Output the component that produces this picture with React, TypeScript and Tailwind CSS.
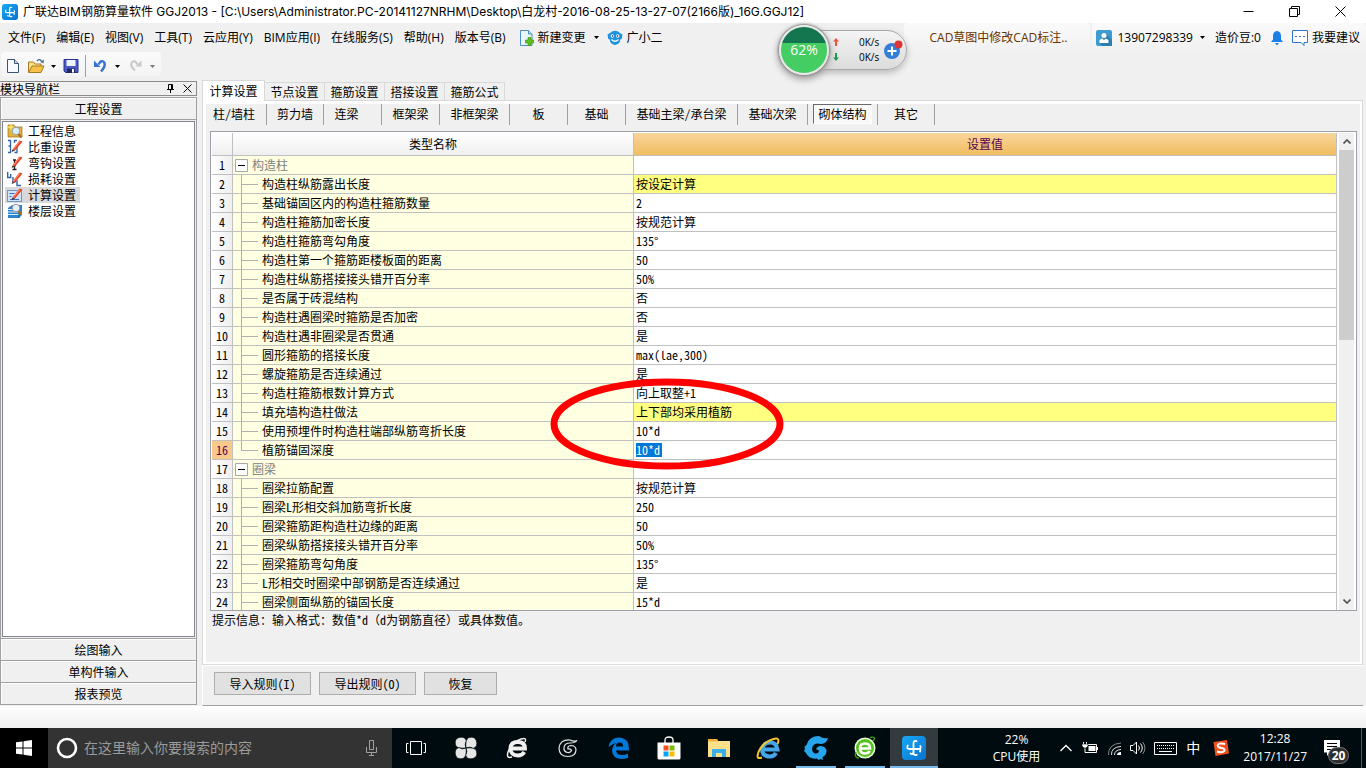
import React from "react";

const UI = "font-['Open_Sans','Noto_Sans_CJK_SC',sans-serif]";
const MONO = "font-['Noto_Sans_Mono_CJK_SC','Noto_Sans_CJK_SC',monospace]";

type Row = { name: string; value?: string; group?: boolean; mark?: boolean; last?: boolean; active?: boolean };

const rows: Row[] = [
  { name: "构造柱", group: true },
  { name: "构造柱纵筋露出长度", value: "按设定计算", mark: true },
  { name: "基础锚固区内的构造柱箍筋数量", value: "2" },
  { name: "构造柱箍筋加密长度", value: "按规范计算" },
  { name: "构造柱箍筋弯勾角度", value: "135°" },
  { name: "构造柱第一个箍筋距楼板面的距离", value: "50" },
  { name: "构造柱纵筋搭接接头错开百分率", value: "50%" },
  { name: "是否属于砖混结构", value: "否" },
  { name: "构造柱遇圈梁时箍筋是否加密", value: "否" },
  { name: "构造柱遇非圈梁是否贯通", value: "是" },
  { name: "圆形箍筋的搭接长度", value: "max(lae,300)" },
  { name: "螺旋箍筋是否连续通过", value: "是" },
  { name: "构造柱箍筋根数计算方式", value: "向上取整+1" },
  { name: "填充墙构造柱做法", value: "上下部均采用植筋", mark: true },
  { name: "使用预埋件时构造柱端部纵筋弯折长度", value: "10*d" },
  { name: "植筋锚固深度", value: "10*d", last: true, active: true },
  { name: "圈梁", group: true },
  { name: "圈梁拉筋配置", value: "按规范计算" },
  { name: "圈梁L形相交斜加筋弯折长度", value: "250" },
  { name: "圈梁箍筋距构造柱边缘的距离", value: "50" },
  { name: "圈梁纵筋搭接接头错开百分率", value: "50%" },
  { name: "圈梁箍筋弯勾角度", value: "135°" },
  { name: "L形相交时圈梁中部钢筋是否连续通过", value: "是" },
  { name: "圈梁侧面纵筋的锚固长度", value: "15*d" },
];

const menus = ["文件(F)", "编辑(E)", "视图(V)", "工具(T)", "云应用(Y)", "BIM应用(I)", "在线服务(S)", "帮助(H)", "版本号(B)"];

const categories: [string, string][] = [
  ["柱/墙柱", "w-[61px] pr-1"],
  ["剪力墙", "w-[57px]"],
  ["连梁", "w-[58px] pr-3"],
  ["框架梁", "w-[58px]"],
  ["非框架梁", "w-[70px]"],
  ["板", "w-[58px]"],
  ["基础", "w-[58px]"],
  ["基础主梁/承台梁", "w-[112px]"],
  ["基础次梁", "w-[70px]"],
  ["砌体结构", "w-[70px]"],
  ["其它", "w-[57px]"],
];

function AppLogo({ className }: { className: string }) {
  return (
    <svg className={className} viewBox="0 0 24 24" aria-hidden="true">
      <defs>
        <linearGradient id="logoFill" x1="0" y1="0" x2="1" y2="1">
          <stop offset="0" stopColor="#18a8f5" />
          <stop offset="1" stopColor="#0a72cf" />
        </linearGradient>
      </defs>
      <rect width="24" height="24" rx="4" fill="url(#logoFill)" />
      <path d="M14.500 5.200Q11.500 4 11.500 7.500v9q0 3.300 3.300 2.300M8.500 17.500q2.500 1.500 3-1.500M5.800 9.500q-1.800 3.500 1.700 3.500h8.500q3.800 0 2.300-3M17.500 13q1.500.5.500 2.500" fill="none" stroke="#fff" strokeWidth="1.800" strokeLinecap="round" />
    </svg>
  );
}

function Caret({ className = "text-black" }: { className?: string }) {
  return (
    <svg className={`h-[3px] w-[5px] ${className}`} viewBox="0 0 5 3" aria-hidden="true">
      <path d="M0 0h5L2.500 3z" fill="currentColor" />
    </svg>
  );
}

const pencil = (
  <g>
    <path d="M5.500 10.500 12.500 1.500l3 1-7.500 9z" fill="#e8401f" />
    <path d="M5.500 10.500 12 2.200l1.200.6-6.500 8z" fill="#ff8a6c" />
    <path d="m5.500 10.500-.9 2.500 3.400-1.500z" fill="#333" />
  </g>
);

const modules: { label: string; icon: React.ReactNode }[] = [
  {
    label: "工程信息",
    icon: (
      <g>
        <path d="M1 2h6l1 2h7v10H1z" fill="#e7b437" stroke="#97701e" strokeWidth=".7" />
        <path d="M0 3l3 .5L4 0l1 3 3 1-3 1-1 3-1-3-3-.5z" fill="#ffe45e" />
        <circle cx="9" cy="8" r="3.800" fill="#dcecf8" stroke="#8aa3b8" />
        <path d="m11.500 11 3 3.500" stroke="#b06c1a" strokeWidth="2" />
      </g>
    ),
  },
  {
    label: "比重设置",
    icon: (
      <g>
        <path d="M1 1.500h2.500v12H1M10 1.500H7.500V4M7.500 13.500H10V8M1.500 7h2" fill="none" stroke="#3262a8" strokeWidth="1.300" />
        {pencil}
      </g>
    ),
  },
  {
    label: "弯钩设置",
    icon: (
      <g>
        <path d="M6 5h3M7.500 5v9M5.500 14.500h4M6 10.500h3" fill="none" stroke="#222" strokeWidth="1.300" />
        {pencil}
      </g>
    ),
  },
  {
    label: "损耗设置",
    icon: (
      <g>
        <path d="M.7 1v5.500h3V3M6 6v4.500h3M10 9v5.500h4" fill="none" stroke="#3262a8" strokeWidth="1.400" />
        {pencil}
      </g>
    ),
  },
  {
    label: "计算设置",
    icon: (
      <g>
        <rect x=".5" y="3.500" width="14" height="11" fill="#cfe2fa" stroke="#6d96cf" />
        <path d="M2.500 6.500h5M2.500 9.500h2M3 12.500h9" stroke="#3f6db4" />
        {pencil}
      </g>
    ),
  },
  {
    label: "楼层设置",
    icon: (
      <g>
        <path d="M1 5 5 2h10v10l-3 3H1z" fill="#2f83cc" />
        <path d="M1 6.500h11M1 9h11M1 11.500h11" stroke="#d9f0ff" />
        <path d="M12 5.500V15" stroke="#1a5b9a" />
        <circle cx="9" cy="5" r="3.800" fill="#e7f0f5" stroke="#8b98a3" />
        <path d="m11.500 8 3 3.500" stroke="#b06c1a" strokeWidth="2" />
      </g>
    ),
  },
];

function TitleBar() {
  return (
    <header className="flex h-[23px] shrink-0 items-center bg-white pl-0.5 text-xs">
      <AppLogo className="h-4 w-4" />
      <h1 className="ml-[5px] flex-1 whitespace-nowrap font-['Inter','Noto_Sans_CJK_SC',sans-serif] leading-4">
        广联达BIM钢筋算量软件 GGJ2013 - [C:\Users\Administrator.PC-20141127NRHM\Desktop\白龙村-2016-08-25-13-27-07(2166版)_16G.GGJ12]
      </h1>
      <div className="mr-[3px] flex">
        <button aria-label="最小化" className="flex h-[21px] w-[46px] items-center justify-center">
          <svg className="h-[11px] w-[11px]" viewBox="0 0 11 11"><path d="M.5 5.500h10" stroke="#000" /></svg>
        </button>
        <button aria-label="还原" className="flex h-[21px] w-[46px] items-center justify-center">
          <svg className="h-[11px] w-[11px]" viewBox="0 0 11 11"><path d="M.5 2.500h8v8h-8zM2.500 2.500v-2h8v8h-2" fill="none" stroke="#000" /></svg>
        </button>
        <button aria-label="关闭" className="flex h-[21px] w-[46px] items-center justify-center">
          <svg className="h-[11px] w-[11px]" viewBox="0 0 11 11"><path d="m.5.500 10 10m0-10-10 10" stroke="#000" /></svg>
        </button>
      </div>
    </header>
  );
}

function MenuBar() {
  return (
    <nav className="flex h-[29px] shrink-0 items-center pl-2 text-xs">
      <div className="flex gap-[11px] whitespace-nowrap">
        {menus.map((m) => (
          <button key={m}>{m}</button>
        ))}
      </div>
      <button className="ml-3.5 flex items-center whitespace-nowrap">
        <svg className="mr-1 h-4 w-[14px]" viewBox="0 0 14 16" aria-hidden="true">
          <path d="M.5.500h8l3.500 3.500v11.500H.500z" fill="#e9f5fd" stroke="#4b8fc2" />
          <path d="M8.500.500V4H12" fill="#b9dcf2" stroke="#4b8fc2" />
          <path d="M8 7.500h3v2.500h2.700v3H11v2.700H8V13H5.500v-3H8z" fill="#5fbf1d" stroke="#3a8f10" strokeWidth=".6" />
        </svg>
        新建变更
        <span className="ml-2"><Caret /></span>
      </button>
      <button className="ml-2 flex items-center whitespace-nowrap">
        <svg className="mr-1 h-4 w-4" viewBox="0 0 16 16" aria-hidden="true">
          <path d="M3 3Q8-1.500 13 3l2.500 1.500-.8 4.500-1.400.5Q13 14 8 15 3 14 2.700 9.500L1.300 9 .5 4.500z" fill="#1d93e0" />
          <circle cx="5.300" cy="6" r="1.700" fill="#fff" />
          <circle cx="10.700" cy="6" r="1.700" fill="#fff" />
          <circle cx="5.500" cy="6" r=".8" fill="#124" />
          <circle cx="10.500" cy="6" r=".8" fill="#124" />
          <path d="M4.500 9.500q3.500 3.500 7 0" fill="none" stroke="#fff" strokeWidth="1.200" />
        </svg>
        广小二
      </button>
      <div className="ml-auto flex h-full items-center whitespace-nowrap">
        <div className="flex h-full w-[186px] items-center rounded-t bg-gradient-to-b from-[#fafafa] to-[#f1f1f1] pl-[25px]">
          <a href="#cad" className="text-[#663300]">CAD草图中修改CAD标注..</a>
        </div>
        <div className="ml-0.5 flex h-full items-center rounded-t bg-gradient-to-b from-[#fafafa] to-[#f1f1f1] pl-1 pr-1.5">
          <button className="flex items-center">
            <svg className="mr-[5px] h-4 w-4" viewBox="0 0 16 16" aria-hidden="true">
              <rect width="16" height="16" rx="2" fill="#3d9bd0" />
              <path d="m10 4 6 6v6H6l-2-3z" fill="#2b7fb0" />
              <circle cx="8" cy="5.500" r="2.500" fill="#fff" />
              <path d="M3.500 13V10l2.500-1.500L8 10l2-1.500 2.500 1.500v3z" fill="#fff" />
            </svg>
            13907298339
            <span className="ml-[7px]"><Caret /></span>
          </button>
          <span className="ml-2.5">造价豆:0</span>
          <button aria-label="通知" className="ml-2.5">
            <svg className="h-4 w-3" viewBox="0 0 12 16" aria-hidden="true">
              <path d="M6 1Q10 1.500 10 6v3.500l2 2.500H0l2-2.500V6Q2 1.500 6 1z" fill="#1b7fe8" />
              <path d="M4 13h4l-2 2.500z" fill="#1b7fe8" />
            </svg>
          </button>
          <button className="ml-[9px] flex items-center">
            <svg className="mr-1 h-4 w-4" viewBox="0 0 16 16" aria-hidden="true">
              <path d="M.5.500h15v12H12v3l-3-3H.500z" fill="#fff" stroke="#2f78d2" />
              <path d="M3 6.500h10" stroke="#2f78d2" strokeDasharray="2 2" />
            </svg>
            我要建议
          </button>
        </div>
      </div>
    </nav>
  );
}

function ToolBar() {
  return (
    <div className="flex h-7 shrink-0 items-start">
      <div className="ml-px flex h-6 items-center rounded bg-gradient-to-b from-[#fafafa] to-[#f4f4f4] pl-1.5 pt-1">
        <button aria-label="新建">
          <svg className="h-4 w-3" viewBox="0 0 12 16"><path d="M.5 1.500h7l4 4v9H.500z" fill="#f7fbff" stroke="#3b5275" /><path d="M7.500 1.500v4h4" fill="#c8d8ee" stroke="#3b5275" /></svg>
        </button>
        <button aria-label="打开" className="ml-[9px]">
          <svg className="h-4 w-[17px]" viewBox="0 0 17 16"><path d="M.5 14V4h5l1.500 2h6v3" fill="#fbe08c" stroke="#a77a21" /><path d="M.5 14.500 4 8h12l-3 6.500z" fill="#f7c04a" stroke="#a77a21" /><path d="M9 3q3-3 5 1" fill="none" stroke="#4d7191" strokeWidth="1.300" /><path d="m16 1.500-.5 4-3.200-1.500z" fill="#4d7191" /></svg>
        </button>
        <button aria-label="打开列表" className="ml-1.5 flex h-4 items-center"><Caret /></button>
        <button aria-label="保存" className="ml-[7px]">
          <svg className="h-4 w-4" viewBox="0 0 16 16"><path d="M1 1.500h14v13H2.500L1 13z" fill="#4a58c8" stroke="#27348f" /><path d="M3.500 2h9v6h-9z" fill="#eef2ff" /><path d="M4 10.500h8V15H4z" fill="#20285f" /><path d="M9 11h2v3.500H9z" fill="#fff" /></svg>
        </button>
        <span className="ml-1.5 h-[22px] border-l border-[#a0a0a0]" />
        <button aria-label="撤销" className="ml-[7px]">
          <svg className="h-4 w-[14px]" viewBox="0 0 14 16"><path d="M5.500 6.500Q8.500 1 11.300 4.500 13 8.500 8 13.500" fill="none" stroke="#3671d4" strokeWidth="2.400" /><path d="M1 2.500v6.500h6.500z" fill="#3671d4" /></svg>
        </button>
        <button aria-label="撤销列表" className="ml-2 flex h-4 items-center"><Caret /></button>
        <button aria-label="重做" className="ml-[9px]">
          <svg className="h-4 w-[14px]" viewBox="0 0 14 16"><path d="M8.500 6.500Q5.500 1 2.700 4.500 1 8.500 6 12.500" fill="none" stroke="#c8c8c8" strokeWidth="2" /><path d="M12.500 2.500v6H6.500z" fill="#c8c8c8" /></svg>
        </button>
        <button aria-label="重做列表" className="ml-[7px] mr-1.5 flex h-4 items-center"><Caret className="text-[#777]" /></button>
      </div>
    </div>
  );
}

const sideButton = "flex h-[22px] w-full shrink-0 items-center justify-center border-x border-b border-[#a0a0a0] bg-[#f0f0f0] shadow-[inset_1px_1px_0_#fff]";

function Sidebar() {
  return (
    <aside className="flex w-[197px] shrink-0 flex-col pb-[1px] text-xs leading-4">
      <div className="mt-px flex h-[15px] shrink-0 items-center border-y border-r border-[#8c8c8c]">
        <h2 className="flex-1 leading-[13px]">模块导航栏</h2>
        <button aria-label="固定" className="mr-[9px]">
          <svg className="h-[9px] w-[7px]" viewBox="0 0 7 9"><path d="M1.500 5V.500h4V5M0 5.500h7M3.500 6v3M4.500 1v4" fill="none" stroke="#000" /></svg>
        </button>
        <button aria-label="关闭面板" className="mr-1">
          <svg className="h-[9px] w-[9px]" viewBox="0 0 9 9"><path d="m.5.500 8 8m0-8-8 8" stroke="#000" /></svg>
        </button>
      </div>
      <button className="mt-px flex h-[23px] shrink-0 items-center justify-center border border-[#a0a0a0] shadow-[inset_1px_1px_0_#fff]">工程设置</button>
      <div className="flex min-h-0 flex-1 flex-col border-x border-b border-[#a0a0a0] px-px pb-px pt-px">
        <ul className="flex-1 border border-[#82878f] bg-white pl-[2px] pt-[1px]">
          {modules.map((m) => (
            <li key={m.label} className="flex h-4">
              <button className={`flex h-4 items-center pr-1 ${m.label === "计算设置" ? "bg-[#d9d9d9]" : ""}`}>
                <svg className="ml-0.5 mr-[5px] h-4 w-4" viewBox="0 0 16 16" aria-hidden="true">{m.icon}</svg>
                {m.label}
              </button>
            </li>
          ))}
        </ul>
      </div>
      <button className={sideButton}>绘图输入</button>
      <button className={sideButton}>单构件输入</button>
      <button className={sideButton}>报表预览</button>
    </aside>
  );
}

function NameCell({ row }: { row: Row }) {
  if (row.group) {
    return (
      <div className="flex h-[18px] items-center pl-0.5 text-[#808080]">
        <button aria-label={`折叠${row.name}`} className="mr-1">
          <svg className="h-[13px] w-[13px]" viewBox="0 0 13 13"><path d="M.5.500h12v12H.500z" fill="#fff" stroke="#a8a8a8" /><path d="M3 6.500h7" stroke="#000" /></svg>
        </button>
        {row.name}
      </div>
    );
  }
  return (
    <div className="flex h-[18px] items-center pl-2">
      <span className="mr-1 flex h-full w-[17px] flex-col">
        <span className="h-[10px] border-b border-l border-[#b0b0b0]" />
        {!row.last && <span className="flex-1 border-l border-[#b0b0b0]" />}
      </span>
      {row.name}
    </div>
  );
}

function SettingsTable() {
  return (
    <div className="relative ml-1 mr-[3px] flex min-h-0 flex-1 border border-[#a0a0a8] bg-white pl-px pt-px">
      <div className="min-w-0 flex-1 overflow-hidden">
        <table className="w-full table-fixed border-separate border-spacing-0 text-xs leading-4">
          <colgroup>
            <col className="w-[21px]" />
            <col className="w-[401px]" />
            <col />
          </colgroup>
          <thead>
            <tr className="h-[23px]">
              <th aria-label="序号" className="border-b border-r border-[#c0c0c0] bg-gradient-to-b from-white to-[#efefef] p-0" />
              <th className="border-b border-r border-[#c0c0c0] bg-gradient-to-b from-white to-[#efefef] p-0 font-normal">类型名称</th>
              <th className="border-b border-r border-[#c0c0c0] bg-gradient-to-b from-[#f8d59b] to-[#f1bd5e] p-0 font-normal text-[#5a0050]">设置值</th>
            </tr>
          </thead>
          <tbody>
            {rows.map((row, i) => (
              <tr key={row.name} className="h-[19px]">
                <td className={`border-b border-r border-[#c0c0c0] p-0 text-center ${row.active ? "bg-[#f9c98b] text-[#5a0050]" : "bg-gradient-to-r from-white to-[#efefef]"}`}>{i + 1}</td>
                <td className="whitespace-nowrap border-b border-r border-[#c0c0c0] bg-[#ffffe1] p-0"><NameCell row={row} /></td>
                <td className={`whitespace-nowrap border-b border-r border-[#c0c0c0] p-0 pl-0.5 ${row.mark ? "bg-[#ffff80]" : "bg-white"}`}>
                  {row.active ? (
                    <input aria-label={row.name} defaultValue={row.value} className="block h-[14px] w-[26px] bg-[#0078d7] text-white outline-none" />
                  ) : (
                    row.value
                  )}
                </td>
              </tr>
            ))}
          </tbody>
        </table>
      </div>
      <div className="ml-0.5 mr-0.5 flex w-[15px] flex-col bg-[#f0f0f0]">
        <button aria-label="向上滚动" className="flex h-[17px] items-center justify-center">
          <svg className="h-[5px] w-[8px]" viewBox="0 0 8 5"><path d="m.5 4.500 3.500-3.500 3.500 3.500" fill="none" stroke="#505050" strokeWidth="1.600" /></svg>
        </button>
        <div className="h-[190px] bg-[#cdcdcd]" />
        <button aria-label="向下滚动" className="mt-auto flex h-[17px] items-center justify-center">
          <svg className="h-[5px] w-[8px]" viewBox="0 0 8 5"><path d="m.5.500 3.500 3.500 3.500-3.500" fill="none" stroke="#505050" strokeWidth="1.600" /></svg>
        </button>
      </div>
      <svg className="pointer-events-none absolute left-[339px] top-[246px] h-[92px] w-[234px]" viewBox="0 0 234 92" aria-hidden="true">
        <ellipse cx="117" cy="46" rx="113" ry="42" fill="none" stroke="#ff0000" strokeWidth="7" />
      </svg>
    </div>
  );
}

function Workspace() {
  const small = "h-[18px] w-[60px] border-r border-t border-[#d9d9d9] leading-[18px]";
  const action = "h-[23px] border border-[#adadad] bg-[#e1e1e1]";
  return (
    <main className="ml-[5px] mr-[3px] flex min-w-0 flex-1 flex-col text-xs leading-4">
      <div className="flex h-5 shrink-0 items-end" role="tablist">
        <button role="tab" aria-selected="true" className="z-10 -mb-px h-[21px] w-[63px] border-x border-t border-[#d9d9d9] bg-white">计算设置</button>
        <button role="tab" className={small}>节点设置</button>
        <button role="tab" className={small}>箍筋设置</button>
        <button role="tab" className={small}>搭接设置</button>
        <button role="tab" className={small}>箍筋公式</button>
      </div>
      <section className="flex min-h-0 flex-1 flex-col border border-[#d9d9d9] bg-white pb-0.5 pl-[3px] pr-0.5 pt-[3px]">
        <div className="flex min-h-0 flex-1 flex-col bg-[#f0f0f0]">
          <div className="flex h-[27px] shrink-0 items-start">
            {categories.map(([label, width]) => (
              <button key={label} className={`flex h-[21px] items-center justify-center whitespace-nowrap border-r border-[#a0a0a0] pb-0.5 ${width}`}>
                {label === "砌体结构" ? (
                  <span className="border border-b-white border-l-[#696969] border-r-white border-t-[#696969] bg-[#f8f8f8] px-1 py-px">{label}</span>
                ) : (
                  label
                )}
              </button>
            ))}
          </div>
          <SettingsTable />
          <p className="h-[51px] shrink-0 px-1.5 pt-px">提示信息：输入格式：数值*d（d为钢筋直径）或具体数值。</p>
        </div>
      </section>
      <div className="flex h-[41px] shrink-0 items-start gap-2 border-b border-l border-b-[#a0a0a0] border-l-white pl-[11px] pt-[7px] shadow-[inset_0_1px_0_#fff]">
        <button className={`w-[97px] ${action}`}>导入规则(I)</button>
        <button className={`w-[97px] ${action}`}>导出规则(O)</button>
        <button className={`w-[73px] ${action}`}>恢复</button>
      </div>
    </main>
  );
}

function SpeedBall() {
  return (
    <div className="absolute left-[779px] top-[25px] flex items-center text-[10px]">
      <div className="z-10 flex h-[50px] w-[50px] items-center justify-center rounded-full border-2 border-[#e8e8e8] bg-gradient-to-b from-[#13764f] from-35% to-[#43cd62] to-35% text-sm text-white shadow-[0_0_2px_1px_#888,0_3px_6px_2px_#aaa]">62%</div>
      <div className="-ml-[25px] flex h-10 w-[103px] items-center rounded-r-full border border-[#a8a8a8] bg-gradient-to-b from-[#f4f4f4] to-[#dcdcdc] pl-7 shadow-[0_3px_6px_#bbb]">
        <svg className="h-6 w-[6px]" viewBox="0 0 6 24" aria-hidden="true">
          <path d="M3 0 6 3.500H4V8H2V3.500H0z" fill="#f0523a" />
          <path d="m3 23 3-3.500H4V15H2v4.500H0z" fill="#169a4c" />
        </svg>
        <div className="ml-5 leading-[15px]">
          <div>0K/s</div>
          <div>0K/s</div>
        </div>
        <svg className="ml-1 h-5 w-5" viewBox="0 0 20 20" aria-hidden="true">
          <circle cx="9" cy="11" r="8" fill="#337fd8" />
          <path d="M9 6.500v9M4.500 11h9" stroke="#fff" strokeWidth="2" />
          <circle cx="15.500" cy="4.500" r="4" fill="#e03434" />
        </svg>
      </div>
    </div>
  );
}

const taskApps: { label: string; box: string; icon: React.ReactNode }[] = [
  {
    label: "任务视图",
    box: "w-12",
    icon: <path d="M6.500 5.500h11v13h-11zM4.500 7.500h-2v9h2M19.500 7.500h2v9h-2" fill="none" stroke="#fff" />,
  },
  {
    label: "应用中心",
    box: "w-[51px]",
    icon: (
      <g fill="#e6e6e6" stroke="#000b0f" strokeWidth=".7">
        <path d="M12 12Q3 13 1.500 9 0 3 5 1.500 11 0 12.500 5 10 8 12 12z" />
        <path d="M12 12Q11 3 15 1.500 21 0 22.500 5 24 11 19 12.500 16 10 12 12z" />
        <path d="M12 12q9-1 10.500 3Q24 21 19 22.500 13 24 11.500 19 14 16 12 12z" />
        <path d="M12 12q1 9-3 10.500Q3 24 1.500 19 0 13 5 11.500 8 14 12 12z" />
      </g>
    ),
  },
  {
    label: "浏览器",
    box: "w-[51px]",
    icon: (
      <g fill="none" stroke="#f0f0f0">
        <path d="M5.500 12.500H20Q20 6 12.800 6T5.500 12.500q0 7 7.300 7 4.500 0 6.500-3.500" strokeWidth="3.800" />
        <path d="M20 6q2-5-4-3Q7 6 3 16q-2 7 4 5" strokeWidth="1.500" />
      </g>
    ),
  },
  {
    label: "看图工具",
    box: "w-[51px]",
    icon: (
      <g fill="none" stroke="#e8e8e8" strokeWidth="1.200">
        <path d="M21 4.500q-3 1.500-7-.5Q4 3.500 3 12q0 8.500 9 8.500 8 0 8-7-.5-4-5-4-4 .5-3 3.500 3-.5 3.500 1.500-1 2.500-4 2-4-1-3.500-5Q8.500 7 14 7q5 0 7-2.500z" />
      </g>
    ),
  },
  {
    label: "Edge",
    box: "w-[51px]",
    icon: <path d="M1.500 11Q3 1.500 12.500 1.500 22 2 22 13v1.500H9q.5 4.500 6 4.500 3.500 0 6-1.500v4.200Q18 23 14 23q-8.500-.5-9-8.500Q5.500 9 9.500 7 6 7.500 1.500 11zM9 10.500h7.200Q16 6.500 12.500 6.500T9 10.500z" fill="#0078d7" />,
  },
  {
    label: "应用商店",
    box: "w-[50px]",
    icon: (
      <g>
        <path d="M8 7V4q0-3 4-3t4 3v3" fill="none" stroke="#fff" strokeWidth="1.300" />
        <path d="M.5 6.500h23V22q0 1.500-1.500 1.500H2Q.5 23.500.5 22z" fill="#fff" />
        <path d="M6.500 9.500h5v5h-5z" fill="#f25022" />
        <path d="M12.500 9.500h5v5h-5z" fill="#7fba00" />
        <path d="M6.500 15.500h5v5h-5z" fill="#00a4ef" />
        <path d="M12.500 15.500h5v5h-5z" fill="#ffb900" />
      </g>
    ),
  },
  {
    label: "文件资源管理器",
    box: "w-[49px]",
    icon: (
      <g>
        <path d="M1 3h9l1 2h12v16H1z" fill="#ffe08a" />
        <path d="M1 3h9l1 2.500H1z" fill="#f0b23c" />
        <path d="M5 21v-8h14v8h-4v-4H9v4z" fill="#3ab0ea" />
      </g>
    ),
  },
  {
    label: "Internet Explorer",
    box: "w-[50px]",
    icon: (
      <g fill="none">
        <path d="M6 13.500h15.500Q20.500 6.500 14 6.500T6 13.500q.5 7 8 7 4 0 6-3.500" stroke="#45a6ea" strokeWidth="4" />
        <path d="M21.500 8q3-7-4-5Q7 6 2.500 16-.5 24 6 21.500" stroke="#f7c52b" strokeWidth="2" />
      </g>
    ),
  },
  {
    label: "看图",
    box: "ml-[3px] w-10 border-y-2 border-b-[#76b9ed] border-t-transparent",
    icon: (
      <g fill="#26a4ee">
        <path d="M24 2q-1 5.500-7 6-6-2-8.500 2.500Q7 16 11 17.500q3.500.5 4-2.500-.5-2-3-1.500 1-3.500 5-3.500 5.500 1 5.500 5 0 4-4 6l.5 3-2.500-1-2 1-1.500-1.500Q5 23.500 2 17L0 15l1-2-.5-2.500 2-1.500Q5 0 15 0q4 3 9 2z" />
      </g>
    ),
  },
  {
    label: "360浏览器",
    box: "ml-[9px] w-10 border-y-2 border-b-[#76b9ed] border-t-transparent",
    icon: (
      <g>
        <circle cx="12" cy="12" r="10.500" fill="#e8ffd8" />
        <circle cx="12" cy="12" r="9" fill="#55c21f" />
        <path d="M7 12.500h10q0-5-5-5t-5 5q0 5 5 5 3.500 0 4.500-2.500" fill="none" stroke="#fff" strokeWidth="2.600" />
        <path d="M20 5q4-5-3-3.500M3 16q-2 6 3 6" fill="none" stroke="#3d9b12" strokeWidth="1.500" />
      </g>
    ),
  },
];

function TaskBar() {
  return (
    <footer className="flex h-10 shrink-0 items-center bg-[#000b0f] text-xs text-white">
      <button aria-label="开始" className="flex h-full w-12 items-center justify-center bg-black">
        <svg className="h-4 w-4" viewBox="0 0 16 16"><path d="M0 2.300 6.500 1.400V7.500H0zM7.500 1.200 16 0v7.500H7.500zM0 8.500h6.500v6.100L0 13.700zM7.500 8.500H16V16l-8.500-1.200z" fill="#fff" /></svg>
      </button>
      <label className="flex h-full w-[344px] items-center bg-[#333] pl-2">
        <svg className="h-[22px] w-[22px]" viewBox="0 0 22 22" aria-hidden="true"><circle cx="11" cy="11" r="9" fill="none" stroke="#fff" strokeWidth="2.600" /></svg>
        <input aria-label="搜索" placeholder="在这里输入你要搜索的内容" className="ml-1.5 min-w-0 flex-1 bg-transparent text-sm outline-none placeholder:text-[#9a9a9a]" />
        <svg className="mr-[15px] h-4 w-[11px]" viewBox="0 0 11 16" aria-hidden="true"><path d="M3.500.500h4v9h-4zM.5 7v5.500h10V7M5.500 12.500v3M3 15.500h5" fill="none" stroke="#a0a0a0" /></svg>
      </label>
      {taskApps.map((app) => (
        <button key={app.label} aria-label={app.label} className={`flex h-full items-center justify-center ${app.box}`}>
          <svg className="h-6 w-6" viewBox="0 0 24 24" aria-hidden="true">{app.icon}</svg>
        </button>
      ))}
      <button aria-label="广联达钢筋算量" className="ml-[5px] flex h-full w-12 items-center justify-center border-y-2 border-b-[#76b9ed] border-t-[#333b3e] bg-[#333b3e]">
        <AppLogo className="h-6 w-6" />
      </button>
      <div className="ml-auto flex h-full items-center whitespace-nowrap">
        <div className="text-center leading-[17px]">
          <div>22%</div>
          <div>CPU使用</div>
        </div>
        <button aria-label="显示隐藏的图标" className="ml-5">
          <svg className="h-2 w-3" viewBox="0 0 12 8"><path d="m.5 7 5.500-5.500L11.500 7" fill="none" stroke="#fff" strokeWidth="1.300" /></svg>
        </button>
        <button aria-label="电池" className="ml-2.5">
          <svg className="h-4 w-4" viewBox="0 0 16 16"><path d="M5.500 4.500h9v8h-9M15.500 7v3" fill="none" stroke="#fff" /><path d="M6.500 6h7v5h-7z" fill="#fff" /><path d="M1.500 2v2M4.500 2v2M3 8v4.500h3" stroke="#fff" fill="none" /><path d="M0 4h6v2L4 8H2L0 6z" fill="#fff" stroke="#000b0f" strokeWidth=".6" /></svg>
        </button>
        <button aria-label="网络" className="ml-2.5">
          <svg className="h-4 w-[14px]" viewBox="0 0 14 16"><g fill="none" stroke="#e0e0e0"><path d="M.5 15Q0 4 13 3" stroke="#888" /><path d="M3.500 15Q3 7 13 6.500" /><path d="M6.500 15q0-5 6.500-5.500" /></g><path d="M9 15q0-3 4-3v3z" fill="#fff" /></svg>
        </button>
        <button aria-label="音量" className="ml-2">
          <svg className="h-4 w-4" viewBox="0 0 16 16"><path d="M.5 5.500H3L6.500 2v12L3 10.500H.500zM8.500 5.500q2 2.500 0 5M10.500 3.500q3.500 4.500 0 9" fill="none" stroke="#fff" /><path d="M12.700 2q4.500 6 0 12" fill="none" stroke="#888" /></svg>
        </button>
        <button aria-label="触摸键盘" className="ml-2">
          <svg className="h-[13px] w-[23px]" viewBox="0 0 23 13"><path d="M.5.500h22v12H.500z" fill="none" stroke="#fff" /><path d="M3 3.500h17M3 6.500h17" stroke="#fff" strokeDasharray="1 1" /><path d="M5 9.500h13" stroke="#fff" /></svg>
        </button>
        <button className="ml-[9px] text-sm">中</button>
        <button aria-label="搜狗输入法" className="ml-[13px]">
          <svg className="h-4 w-4" viewBox="0 0 16 16"><path d="m.5 2 13.500-2 2 13.500L2.500 16z" fill="#f4501e" /><path d="M12 4Q5 2.500 4.700 5.500 5 7.500 8.500 8t3 2.700Q9.500 13.500 4 11.500" fill="none" stroke="#fff" strokeWidth="2" /></svg>
        </button>
        <div className="ml-[14px] text-center leading-[18px]">
          <div>12:28</div>
          <div>2017/11/27</div>
        </div>
        <button aria-label="通知，20条" className="relative ml-[17px] h-full w-[27px]">
          <svg className="h-4 w-4" viewBox="0 0 16 16" aria-hidden="true"><path d="M0 0h16v12.500H6L3 16v-3.500H0z" fill="#fff" /><path d="M3 3.500h10M3 6.500h10M3 9.500h6" stroke="#000" /></svg>
          <span className="absolute bottom-1 left-1 flex h-[17px] w-[21px] items-center justify-center rounded-full border border-[#777] bg-[#2e2e2e] font-bold">20</span>
        </button>
        <span className="ml-2.5 mr-1 h-full border-l border-[#5a5a5a]" />
      </div>
    </footer>
  );
}

export default function App() {
  return (
    <div className={`relative flex h-screen flex-col overflow-hidden bg-[#f0f0f0] text-black ${UI}`}>
      <TitleBar />
      <MenuBar />
      <ToolBar />
      <div className={`flex min-h-0 flex-1 ${MONO}`}>
        <Sidebar />
        <Workspace />
      </div>
      <div className="h-[22px] shrink-0 bg-gradient-to-b from-white to-[#f0f0f0]" />
      <TaskBar />
      <SpeedBall />
    </div>
  );
}
